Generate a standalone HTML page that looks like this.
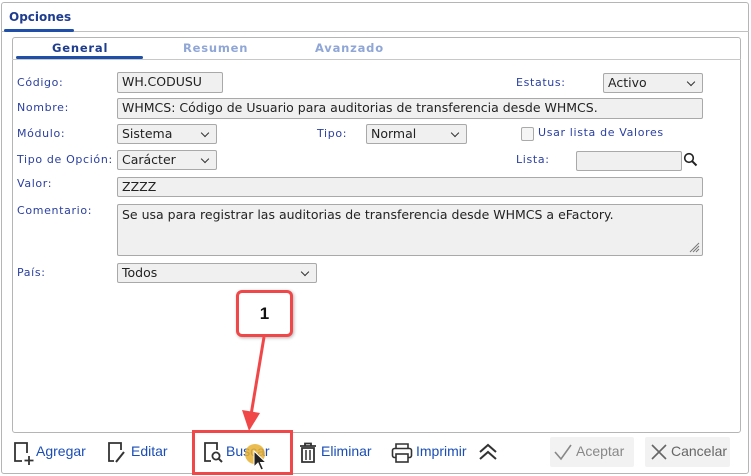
<!DOCTYPE html>
<html><head><meta charset="utf-8"><style>
*{box-sizing:border-box;margin:0;padding:0}
body{width:751px;height:476px;background:#fff;position:relative;overflow:hidden;font-family:"DejaVu Sans","Liberation Sans",sans-serif}
.a{position:absolute}
.lbl{position:absolute;font-size:11px;color:#2a3fa0;letter-spacing:0.65px}
.in{position:absolute;background:#f0f0f0;border:1px solid #a9a9a9;border-radius:2px;font-size:12.5px;color:#222;padding:1px 4px;line-height:16px;white-space:nowrap;overflow:hidden}
.sel{position:absolute;background:#f0f0f0;border:1px solid #a9a9a9;border-radius:2px;font-size:12.5px;color:#222;padding:0 4px;line-height:17px}
.sel:after{content:"";position:absolute;right:8px;top:5px;width:5px;height:5px;border-right:1.3px solid #333;border-bottom:1.3px solid #333;transform:rotate(45deg)}
.tb{position:absolute;top:443px;font-size:14px;color:#1a4db5;font-family:"Liberation Sans",sans-serif}
</style></head><body>
<div class="a" style="left:1px;top:2px;width:748px;height:472px;border:1px solid #b5b5b5;border-radius:3px"></div>
<div class="a" style="left:9px;top:10px;font-size:12px;font-weight:bold;color:#1f3d8f">Opciones</div>
<div class="a" style="left:1px;top:31px;width:748px;height:1px;background:#c0c0c0"></div>
<div class="a" style="left:4px;top:29px;width:70px;height:3px;background:#1f4fa8;border-radius:2px"></div>
<div class="a" style="left:12px;top:37px;width:729px;height:396px;border:1px solid #b5b5b5;border-radius:3px"></div>
<div class="a" style="left:12px;top:59px;width:729px;height:1px;background:#c8c8c8"></div>
<div class="a" style="left:16px;top:56px;width:127px;height:3px;background:#1f4fa8;border-radius:2px"></div>
<div class="a" style="left:52px;top:41px;font-size:11.5px;font-weight:bold;color:#1f3d8f;letter-spacing:0.8px">General</div>
<div class="a" style="left:183px;top:41px;font-size:11.5px;font-weight:bold;color:#8fa6d6;letter-spacing:0.8px">Resumen</div>
<div class="a" style="left:315px;top:41px;font-size:11.5px;font-weight:bold;color:#8fa6d6;letter-spacing:0.8px">Avanzado</div>

<div class="lbl" style="left:17px;top:76px">Código:</div>
<div class="in" style="left:117px;top:72px;width:106px;height:21px">WH.CODUSU</div>
<div class="lbl" style="left:516px;top:76px">Estatus:</div>
<div class="sel" style="left:603px;top:73px;width:100px;height:20px">Activo</div>

<div class="lbl" style="left:17px;top:101px">Nombre:</div>
<div class="in" style="left:117px;top:98px;width:586px;height:21px">WHMCS: Código de Usuario para auditorias de transferencia desde WHMCS.</div>

<div class="lbl" style="left:17px;top:127px">Módulo:</div>
<div class="sel" style="left:117px;top:124px;width:100px;height:20px">Sistema</div>
<div class="lbl" style="left:317px;top:127px">Tipo:</div>
<div class="sel" style="left:366px;top:124px;width:101px;height:20px">Normal</div>
<div class="a" style="left:521px;top:127px;width:13px;height:14px;border:1px solid #aaa;border-radius:2px;background:#f5f5f5"></div>
<div class="lbl" style="left:538px;top:126px">Usar lista de Valores</div>

<div class="lbl" style="left:17px;top:153px">Tipo de Opción:</div>
<div class="sel" style="left:117px;top:150px;width:100px;height:20px">Carácter</div>
<div class="lbl" style="left:516px;top:153px">Lista:</div>
<div class="in" style="left:576px;top:151px;width:106px;height:20px"></div>
<svg class="a" style="left:683px;top:152px" width="16" height="16"><circle cx="6" cy="6" r="4.3" fill="none" stroke="#222" stroke-width="1.6"/><line x1="9.2" y1="9.2" x2="13.5" y2="13.5" stroke="#222" stroke-width="2"/></svg>

<div class="lbl" style="left:17px;top:177px">Valor:</div>
<div class="in" style="left:117px;top:177px;width:586px;height:20px">ZZZZ</div>

<div class="lbl" style="left:17px;top:204px">Comentario:</div>
<div class="in" style="left:117px;top:204px;width:586px;height:52px;padding-top:2px">Se usa para registrar las auditorias de transferencia desde WHMCS a eFactory.</div>
<svg class="a" style="left:688px;top:241px" width="12" height="12"><path d="M11 2L2 11M11 5L5 11M11 8L8 11" stroke="#777" stroke-width="1"/></svg>

<div class="lbl" style="left:17px;top:266px">País:</div>
<div class="sel" style="left:117px;top:263px;width:200px;height:20px">Todos</div>

<svg class="a" style="left:12px;top:441px" width="22" height="26"><path d="M10 20H3V2H15V12" fill="none" stroke="#333" stroke-width="1.8"/><path d="M17 15V24M12.5 19.5H21.5" stroke="#333" stroke-width="1.8"/></svg>
<div class="tb" style="left:36px">Agregar</div>
<svg class="a" style="left:106px;top:441px" width="22" height="24"><path d="M8 20H3V2H15V9" fill="none" stroke="#333" stroke-width="1.8"/><path d="M10 21L18 11" stroke="#333" stroke-width="2"/></svg>
<div class="tb" style="left:131px">Editar</div>
<svg class="a" style="left:202px;top:441px" width="22" height="24"><path d="M9 20H3V2H15V9" fill="none" stroke="#333" stroke-width="1.8"/><circle cx="14" cy="15" r="3.6" fill="none" stroke="#333" stroke-width="1.8"/><path d="M16.6 17.6L20 21" stroke="#333" stroke-width="2"/></svg>
<div class="tb" style="left:226px">Buscar</div>
<div class="a" style="left:245px;top:444px;width:20px;height:20px;border-radius:50%;background:#e8b030;opacity:.85"></div>
<svg class="a" style="left:253px;top:450px" width="14" height="22"><path d="M1 1V17L5 13L8 20L10.5 19L7.5 12.5H13Z" fill="#222" stroke="#fff" stroke-width="1"/></svg>
<svg class="a" style="left:298px;top:442px" width="20" height="22"><path d="M2 4H18M7 4V1.5H13V4" fill="none" stroke="#333" stroke-width="1.8"/><path d="M4 6H16V20H4Z" fill="none" stroke="#333" stroke-width="1.8"/><path d="M8 8V18M12 8V18" stroke="#333" stroke-width="1.5"/></svg>
<div class="tb" style="left:321px">Eliminar</div>
<svg class="a" style="left:391px;top:442px" width="22" height="22"><path d="M5 6V2H17V6" fill="none" stroke="#333" stroke-width="1.6"/><rect x="1.5" y="6.5" width="19" height="9" rx="2" fill="none" stroke="#333" stroke-width="1.6"/><rect x="5" y="12" width="12" height="8" fill="#fff" stroke="#333" stroke-width="1.6"/></svg>
<div class="tb" style="left:416px">Imprimir</div>
<svg class="a" style="left:478px;top:443px" width="20" height="18"><path d="M2 9L10 2L18 9M2 16L10 9L18 16" fill="none" stroke="#333" stroke-width="2"/></svg>

<div class="a" style="left:550px;top:437px;width:84px;height:30px;background:#f2f2f2;border-radius:2px"></div>
<svg class="a" style="left:553px;top:443px" width="20" height="18"><path d="M2 9L8 16L18 2" fill="none" stroke="#888" stroke-width="1.6"/></svg>
<div class="tb" style="left:576px;color:#888">Aceptar</div>
<div class="a" style="left:645px;top:437px;width:85px;height:30px;background:#f2f2f2;border-radius:2px"></div>
<svg class="a" style="left:650px;top:443px" width="18" height="18"><path d="M2 2L16 16M16 2L2 16" stroke="#666" stroke-width="1.6"/></svg>
<div class="tb" style="left:671px;color:#666">Cancelar</div>

<div class="a" style="left:236px;top:290px;width:57px;height:47px;border:3px solid #f04848;border-radius:6px;background:#fff;box-shadow:1px 1px 3px rgba(0,0,0,.3);text-align:center;font:bold 17px 'Liberation Sans',sans-serif;line-height:41px;color:#111">1</div>
<svg class="a" style="left:230px;top:335px" width="50" height="100"><path d="M34 2L21 80" stroke="#f04848" stroke-width="3"/><path d="M12 75L19 96L30 78Z" fill="#f04848"/></svg>
<div class="a" style="left:192px;top:430px;width:101px;height:45px;border:3px solid #f04848"></div>
</body></html>
